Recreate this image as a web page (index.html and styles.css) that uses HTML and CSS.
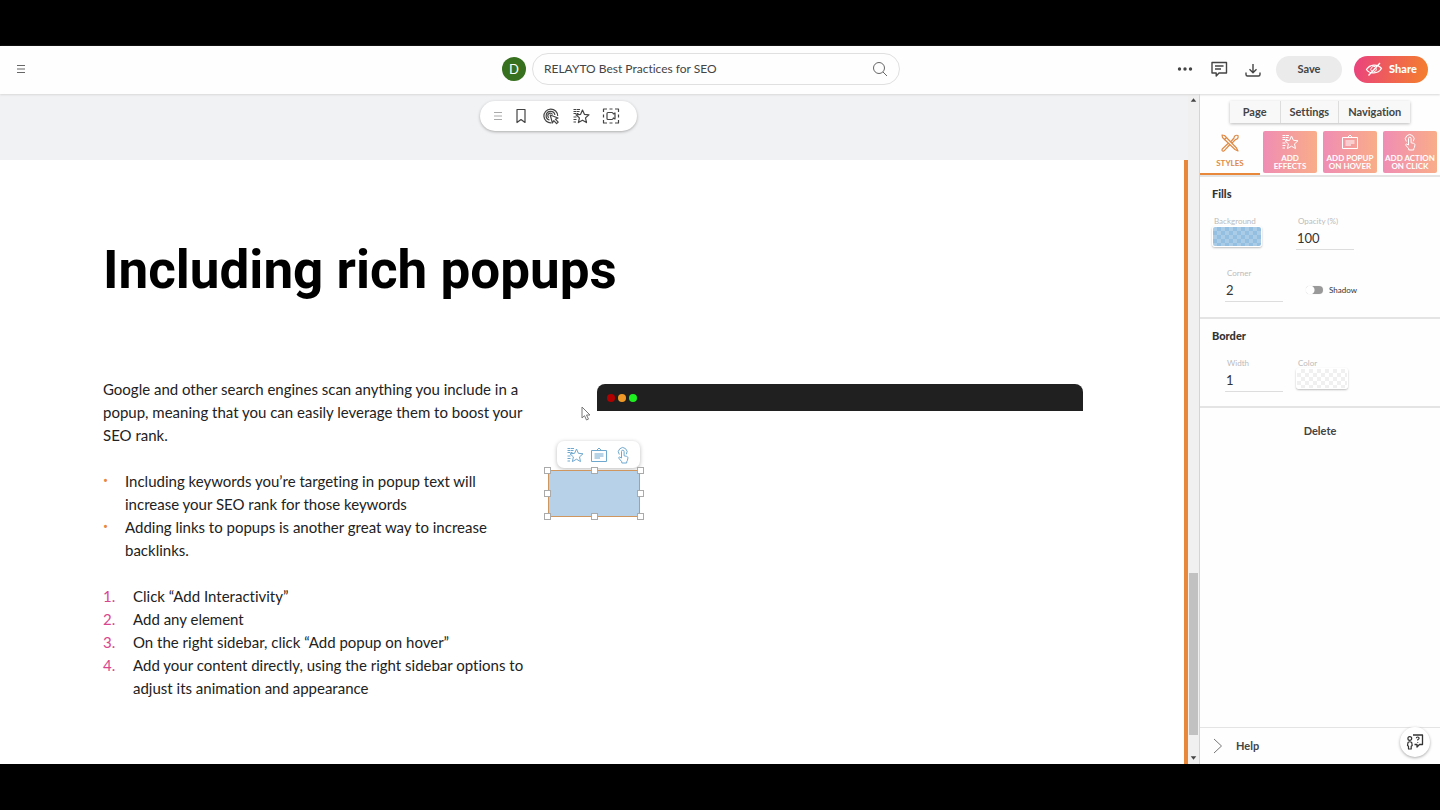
FILE: index.html
```html
<!DOCTYPE html>
<html lang="en">
<head>
<meta charset="utf-8">
<title>RELAYTO Best Practices for SEO</title>
<link rel="stylesheet" href="styles.css">
</head>
<body>
<svg class="sprite" aria-hidden="true">
  <symbol id="i-menu" viewBox="0 0 10 10"><path d="M1 1.500h8M1 5h8M1 8.500h8"/></symbol>
  <symbol id="i-effects" viewBox="0 0 18 18"><path d="M10.500 3l1.900 4.300 4.600.5-3.500 3.100 1 4.700-4-2.400-4.100 2.400 1-4.700L4 7.800l4.600-.5z"/><path d="M1.500 2.500h7M1.500 4.500h6M1.500 6.500h5M1.500 10h3M1.500 12.500h3M1.500 15h2.500" stroke-dasharray="3 .5"/></symbol>
  <symbol id="i-popup" viewBox="0 0 18 18"><path d="M1.500 4.500h15v11h-15zM6.500 4.500L9 2l2.500 2.500M4.500 8h9M4.500 10h9M4.500 12h5.500"/></symbol>
  <symbol id="i-tap" viewBox="0 0 18 18"><path d="M7.500 12V5.500a1.300 1.300 0 0 1 2.600 0v4.300l2.400.5c1 .2 1.500.8 1.400 1.800l-.5 2.400-.7 1.300v1.200H7.800v-1.200l-3-3.600c-.5-.8.5-1.500 1.200-1z"/><path d="M5.300 8.500a4.300 4.300 0 1 1 7-.2"/></symbol>
</svg>

<header class="topbar">
  <button class="icon-btn menu" aria-label="Menu"><svg class="ico ico-s"><use href="#i-menu"/></svg></button>
  <div class="doc">
    <span class="avatar">D</span>
    <div class="search">
      <input type="text" aria-label="Document title" value="RELAYTO Best Practices for SEO">
      <button class="icon-btn" aria-label="Search"><svg class="ico" viewBox="0 0 18 18"><circle cx="8" cy="8" r="5.500"/><path d="M12 12l4 4"/></svg></button>
    </div>
  </div>
  <div class="actions">
    <button class="icon-btn" aria-label="More"><svg class="ico" viewBox="0 0 18 18"><g fill="currentColor" stroke="none"><circle cx="3.500" cy="9" r="1.700"/><circle cx="9" cy="9" r="1.700"/><circle cx="14.500" cy="9" r="1.700"/></g></svg></button>
    <button class="icon-btn" aria-label="Comments"><svg class="ico" viewBox="0 0 18 18"><path d="M2 2.500h14.500v10.500H9L6.200 16v-3H2zM5 6h8.500M5 9h6" stroke-width="1.400"/></svg></button>
    <button class="icon-btn" aria-label="Download"><svg class="ico" viewBox="0 0 18 18"><path d="M9 4v8.500M5.500 9.300L9 12.700l3.500-3.400M2 12.500v2q0 1.500 1.500 1.500h11q1.500 0 1.500-1.500v-2" stroke-width="1.400"/></svg></button>
    <button class="pill save">Save</button>
    <button class="pill share"><svg class="ico" viewBox="0 0 18 18"><path d="M1.500 9.500C5 4 12.500 3.500 16.500 8.500 13 14 5 14.500 1.500 9.500zM3.500 15.500L15 3" stroke-width="1.300"/><path d="M6.800 11.500a3 3 0 0 1 4.200-4.300M11.500 8.500a3 3 0 0 1-3 3.200"/></svg>Share</button>
  </div>
</header>

<div class="workspace">
  <main class="canvas">
    <div class="tray">
      <div class="toolbar">
        <svg class="ico ico-s grip"><use href="#i-menu"/></svg>
        <button class="icon-btn" aria-label="Bookmark"><svg class="ico" viewBox="0 0 18 18"><path d="M5 2.500h8v13l-4-3-4 3z" stroke-width="1.200"/></svg></button>
        <button class="icon-btn" aria-label="Hotspot"><svg class="ico" viewBox="0 0 18 18"><path d="M9.500 15.800A6.900 6.900 0 1 1 15.700 9M7.500 13a4.400 4.400 0 1 1 5.400-5M6.800 10.700a2.500 2.500 0 1 1 3.700-3.200" stroke-width="1.200"/><path d="M8.200 8l7.800 3-2.600 1.200 2.800 2.900-1.600 1.500-2.800-2.900-1.400 2.200z" stroke-width="1.200"/></svg></button>
        <button class="icon-btn" aria-label="Effects"><svg class="ico ico-bold"><use href="#i-effects"/></svg></button>
        <button class="icon-btn" aria-label="Video area"><svg class="ico ico-bold" viewBox="0 0 18 18"><path d="M1.500 5V2H5M7.500 2h3M13 2h3.500v3M16.500 7.500v3M16.500 13v3H13M10.500 16h-3M5 16H1.500v-3M1.500 10.500v-3"/><path d="M5 6.500q0-1 1-1h4q1 0 1.300 1.500L13 6v6l-1.700-1q-.3 1.500-1.300 1.500H6q-1 0-1-1z"/></svg></button>
      </div>
    </div>
    <article class="slide">
      <h1>Including rich popups</h1>
      <div class="columns">
        <div class="copy">
          <p>Google and other search engines scan anything you include in a popup, meaning that you can easily leverage them to boost your SEO rank.</p>
          <ul>
            <li>Including keywords you’re targeting in popup text will increase your SEO rank for those keywords</li>
            <li>Adding links to popups is another great way to increase backlinks.</li>
          </ul>
          <ol>
            <li>Click “Add Interactivity”</li>
            <li>Add any element</li>
            <li>On the right sidebar, click “Add popup on hover”</li>
            <li>Add your content directly, using the right sidebar options to adjust its animation and appearance</li>
          </ol>
        </div>
        <div class="stage">
          <div class="window-bar"><i class="dot red"></i><i class="dot amber"></i><i class="dot green"></i></div>
          <svg class="cursor" viewBox="0 0 10 15"><path d="M1 1v11l2.500-2.300L5.500 14l2-.9-2-4.100H9z"/></svg>
          <div class="quick">
            <button class="icon-btn" aria-label="Add effects"><svg class="ico"><use href="#i-effects"/></svg></button>
            <button class="icon-btn" aria-label="Add popup on hover"><svg class="ico"><use href="#i-popup"/></svg></button>
            <button class="icon-btn" aria-label="Add action on click"><svg class="ico"><use href="#i-tap"/></svg></button>
          </div>
          <div class="selection">
            <i></i><i></i><i></i><i></i><i class="blank"></i><i></i><i></i><i></i><i></i>
          </div>
        </div>
      </div>
    </article>
  </main>
  <div class="scrollbar" aria-hidden="true">
    <svg viewBox="0 0 12 12"><path d="M3 8l3-4 3 4z"/></svg>
    <div class="track"><div class="thumb"></div></div>
    <svg viewBox="0 0 12 12"><path d="M3 4l3 4 3-4z"/></svg>
  </div>

  <aside class="panel">
    <nav class="tabs"><button>Page</button><button>Settings</button><button>Navigation</button></nav>
    <div class="modes">
      <button class="mode current"><svg class="ico" viewBox="0 0 20 20"><path d="M2 2l2.500.5L16.500 15l1.500 3-3-1.500L2.500 4.500zM18 2.500c-2.500-.8-4 .5-4 2.500l-3 3.500 1.300 1.300L15.500 6.500c2 0 3-1.500 2.500-4zM8 10.500L2.300 16q-.8 1.500.3 2 1 .5 1.700-.3L9.500 12M4 7l2.500-2.500" stroke-width="1.200"/></svg>STYLES</button>
      <button class="mode promo"><svg class="ico"><use href="#i-effects"/></svg>ADD<br>EFFECTS</button>
      <button class="mode promo"><svg class="ico"><use href="#i-popup"/></svg>ADD POPUP<br>ON HOVER</button>
      <button class="mode promo"><svg class="ico"><use href="#i-tap"/></svg>ADD ACTION<br>ON CLICK</button>
    </div>
    <section class="group fills">
      <h2>Fills</h2>
      <div class="fields">
        <div class="field"><label for="bg">Background</label><button id="bg" class="swatch blue"></button></div>
        <div class="field"><label for="opacity">Opacity (%)</label><input id="opacity" type="text" value="100"></div>
        <div class="field inset"><label for="corner">Corner</label><input id="corner" type="text" value="2"></div>
        <label class="toggle"><input type="checkbox">Shadow</label>
      </div>
    </section>
    <section class="group border">
      <h2>Border</h2>
      <div class="fields">
        <div class="field inset"><label for="bw">Width</label><input id="bw" type="text" value="1"></div>
        <div class="field"><label for="bc">Color</label><button id="bc" class="swatch"></button></div>
      </div>
    </section>
    <button class="delete">Delete</button>
    <footer class="help">
      <button class="help-btn"><svg class="ico" viewBox="0 0 18 18"><path d="M5 2l7.500 7L5 16"/></svg>Help</button>
      <button class="chat" aria-label="Support"><svg class="ico" viewBox="0 0 18 18"><path d="M7 2h9.500v9.500h-3L11 14v-2.500H8.500" stroke-width="1.300"/><circle cx="3.800" cy="5.500" r="1.900" stroke-width="1.200"/><path d="M2 9.500q1.800-1.500 3.700 0l.5 3-1 .8V16H2.500v-2.700l-1-.8zM10.300 5.300q0-1.300 1.400-1.300t1.400 1.200q0 .8-1.400 1.600v.7M11.700 9v.7" stroke-width="1.200"/></svg></button>
    </footer>
  </aside>
</div>
</body>
</html>
```
FILE: styles.css
```css
* { box-sizing: border-box; }

body {
  margin: 0;
  height: 100vh;
  padding: 46px 0;
  display: flex;
  flex-direction: column;
  overflow: hidden;
  background: #000;
  color: #333;
  font: 12px/16px Lato, "Liberation Sans", sans-serif;
  font-variant-ligatures: none;
}

h1, h2, p, ul, ol { margin: 0; padding: 0; }
button, input { font: inherit; font-variant-ligatures: none; color: inherit; background: none; border: 0; padding: 0; margin: 0; }
input { min-width: 0; outline: 0; }
.sprite { display: none; }

.ico {
  display: block;
  width: 18px;
  height: 18px;
  fill: none;
  stroke: currentColor;
  stroke-linejoin: round;
}
.ico-s { width: 10px; height: 10px; }
.ico-bold { stroke-width: 1.2; }
.icon-btn { flex: none; }

/* Top bar */
.topbar {
  flex: none;
  height: 48px;
  padding: 0 12px 2px 16px;
  display: grid;
  grid-template-columns: 1fr auto 1fr;
  align-items: center;
  background: #fefefe;
  box-shadow: 0 1px 2px #d8d8d8;
  position: relative;
}
.menu { justify-self: start; color: #666; }
.doc { display: flex; align-items: center; gap: 6px; margin-right: 42px; }
.avatar {
  width: 24px;
  height: 24px;
  border-radius: 50%;
  background: #37711f;
  color: #fff;
  font-size: 13px;
  line-height: 24px;
  text-align: center;
}
.search {
  width: 368px;
  height: 32px;
  padding: 0 10px 0 11px;
  display: flex;
  align-items: center;
  border: 1px solid #e0e0e0;
  border-radius: 16px;
  color: #666;
}
.search input { flex: 1; color: #444; }
.actions { display: flex; align-items: center; justify-content: flex-end; gap: 16px; color: #444; }
.pill { height: 27px; border-radius: 14px; font-size: 11px; }
.save { width: 66px; margin-left: -2px; background: #ebebeb; font-weight: 700; }
.share {
  width: 74px;
  margin-left: -4px;
  display: flex;
  align-items: center;
  justify-content: center;
  gap: 6px;
  color: #fff;
  font-weight: 900;
  background: linear-gradient(100deg, #ea427f, #f4802a);
}

/* Workspace */
.workspace { flex: 1; min-height: 0; display: flex; background: #fff; }
.canvas { flex: 1; min-width: 0; display: flex; flex-direction: column; background: #f1f2f4; }
.tray { flex: none; height: 66px; padding: 7px 71px 0 0; display: flex; justify-content: center; }
.toolbar {
  height: 30px;
  padding: 0 17px 0 13px;
  display: flex;
  align-items: center;
  gap: 12px;
  border-radius: 15px;
  background: #fff;
  color: #444;
  box-shadow: 0 1px 3px #aaa;
}
.grip { color: #aaa; margin-right: -3px; }

.slide {
  flex: 1;
  min-height: 0;
  padding: 80px 101px 0 103px;
  background: #fff;
  border-right: 4px solid #e8883a;
}
.slide h1 { color: #000; font: 700 53px/60px Roboto, "Liberation Sans", sans-serif; }
.columns { display: grid; grid-template-columns: 424px 1fr; gap: 70px; margin-top: 78px; }
.copy { color: #222; font-size: 15px; line-height: 23px; }
.copy ul, .copy ol { margin-top: 23px; list-style: none; }
.copy li { position: relative; }
.copy ul li { padding-left: 22px; }
.copy ol li { padding-left: 30px; counter-increment: step; }
.copy li::before { position: absolute; left: 0; }
.copy ul li::before { content: "•"; color: #e8883a; font-family: Roboto, sans-serif; }
.copy ol li::before { content: counter(step) "."; color: #d9468f; }

/* Free canvas items placed over the slide */
.stage { position: relative; padding-top: 6px; }
.window-bar {
  height: 27px;
  padding: 0 10px;
  display: flex;
  align-items: center;
  gap: 3px;
  border-radius: 8px 8px 0 0;
  background: #202020;
}
.dot { width: 8px; height: 8px; border-radius: 50%; }
.red { background: #b00000; }
.amber { background: #ef9a28; }
.green { background: #1ef020; }
.cursor { position: absolute; left: -16px; top: 28px; width: 10px; height: 15px; fill: #fff; stroke: #777; }
.quick {
  position: absolute;
  left: -40px;
  top: 63px;
  width: 83px;
  height: 27px;
  display: flex;
  align-items: center;
  justify-content: center;
  gap: 6px;
  border-radius: 7px;
  background: #fff;
  color: #6fa8cf;
  box-shadow: 0 1px 4px #bbb;
}
.selection {
  position: absolute;
  left: -53px;
  top: 89px;
  width: 100px;
  height: 53px;
  display: grid;
  grid-template-columns: repeat(3, 7px);
  grid-template-rows: repeat(3, 7px);
  justify-content: space-between;
  align-content: space-between;
}
.selection::before {
  content: "";
  position: absolute;
  inset: 3px 4px;
  border: 1px solid #cf965f;
  background: #b7d2e8;
}
.selection i { position: relative; background: #fff; border: 1px solid #aaa; }
.selection .blank { visibility: hidden; }

.scrollbar { width: 12px; flex: none; display: flex; flex-direction: column; background: #f0f0f1; border-right: 1px solid #d4d4d4; }
.scrollbar svg { display: block; width: 11px; height: 12px; fill: #444; }
.track { flex: 1; display: flex; flex-direction: column; justify-content: flex-end; padding: 0 1px 17px; }
.thumb { height: 162px; background: #c1c1c1; }

/* Properties panel */
.panel { width: 240px; flex: none; display: flex; flex-direction: column; background: #fefefe; }
.tabs { align-self: center; display: flex; margin: 7px 0 8px; background: #f8f8f8; box-shadow: 0 1px 3px #bbb; }
.tabs button { height: 22px; padding: 0 9px; font-size: 11px; font-weight: 700; color: #444; }
.tabs button:first-child { padding: 0 13px; }
.tabs button + button { border-left: 1px solid #ddd; }
.modes { display: grid; grid-template-columns: repeat(4, 1fr); border-bottom: 2px solid #e4e4e4; }
.mode {
  height: 42px;
  display: flex;
  flex-direction: column;
  align-items: center;
  font-size: 8px;
  line-height: 8px;
  font-weight: 700;
  white-space: nowrap;
}
.promo { margin: 0 3px; padding-top: 2px; border-radius: 2px; color: #fff; background: linear-gradient(90deg, #f08db4, #f9ad88); }
.promo .ico { margin-bottom: 3px; }
.current { height: 44px; padding-top: 2px; color: #df8a45; border-bottom: 2px solid #e8883a; }
.current .ico { width: 20px; height: 20px; margin-bottom: 6px; }

.group { padding: 9px 12px 0; border-bottom: 2px solid #e4e4e4; }
.fills { height: 142px; }
.border { height: 89px; }
.group h2 { font-size: 11px; line-height: 16px; font-weight: 900; }
.fields { display: grid; grid-template-columns: 72px 1fr; column-gap: 12px; row-gap: 18px; margin-top: 14px; }
.field { display: flex; flex-direction: column; align-items: flex-start; height: 34px; }
.inset { padding-left: 13px; }
.field label { font-size: 8px; line-height: 10px; color: #bbb; margin-left: 2px; }
.field input { width: 58px; height: 24px; padding-left: 1px; font-size: 13px; border-bottom: 1px solid #ddd; }
.swatch {
  width: 50px;
  height: 21px;
  border: 1px solid #fff;
  border-radius: 3px;
  background: repeating-conic-gradient(#f0f0f0 0 25%, #fff 0 50%) 0 0 / 8px 8px;
  box-shadow: 0 1px 2px #bbb;
}
.blue { background: repeating-conic-gradient(#94bfe0 0 25%, #aacce6 0 50%) 0 0 / 8px 8px; }
.toggle { display: flex; align-items: center; gap: 6px; padding: 10px 0 0 10px; font-size: 8px; }
.toggle input {
  appearance: none;
  width: 17px;
  height: 8px;
  border-radius: 4px;
  background: radial-gradient(circle at 4px 4px, #fff 4px, #999 5px);
  box-shadow: 0 0 1px #ccc;
}
.swatch:not(.blue) { width: 52px; }
.delete { align-self: center; margin-top: 15px; font-size: 11px; font-weight: 700; color: #444; }
.help {
  margin-top: auto;
  height: 37px;
  padding: 0 10px 0 9px;
  display: flex;
  align-items: center;
  justify-content: space-between;
  border-top: 1px solid #e4e4e4;
}
.help-btn { display: flex; align-items: center; gap: 9px; font-size: 11px; font-weight: 700; color: #444; }
.help-btn .ico { color: #777; }
.chat { width: 30px; height: 30px; margin-bottom: 8px; padding: 6px; border-radius: 50%; background: #fff; box-shadow: 0 1px 3px #aaa; }
```
